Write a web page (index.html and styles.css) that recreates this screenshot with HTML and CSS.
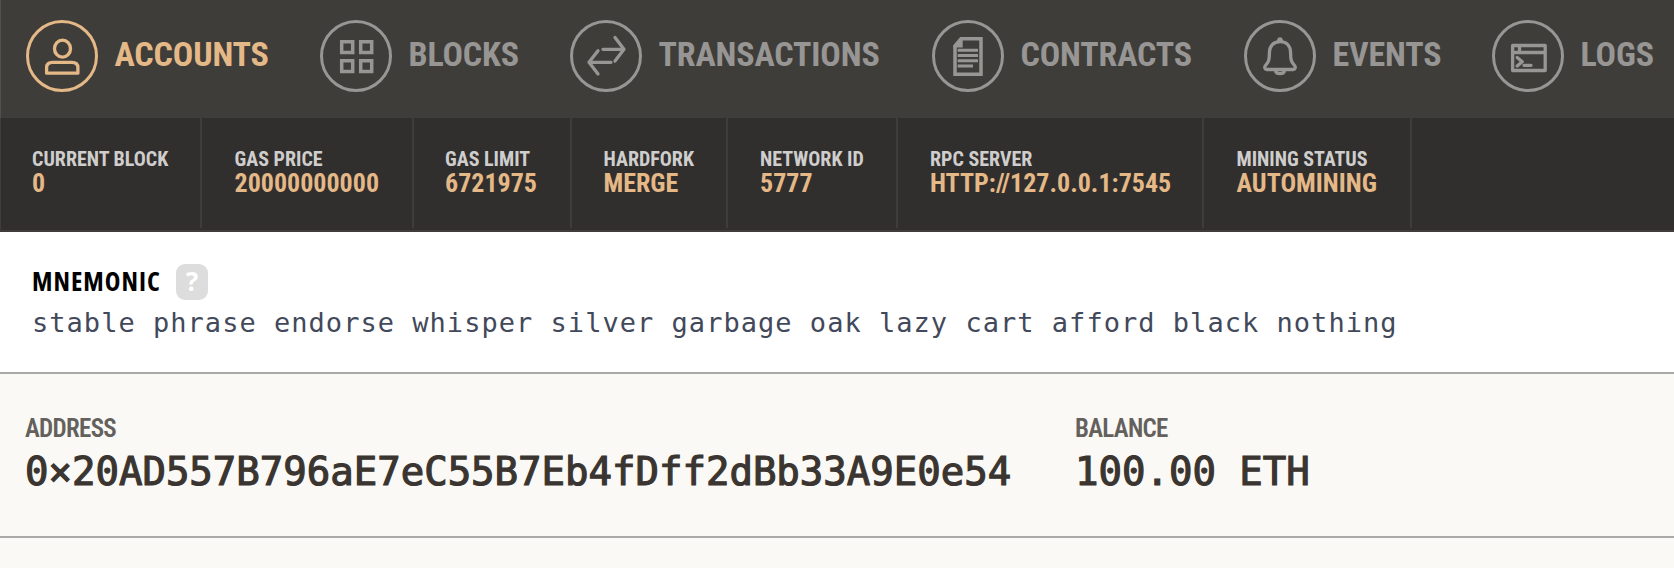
FILE: index.html
```html
<!DOCTYPE html>
<html lang="en">
<head>
    <meta charset="UTF-8">
    <meta name="viewport" content="width=device-width, initial-scale=1.0">
    <title>Accounts</title>
    <link rel="stylesheet" href="styles.css">
</head>
<body>
    <nav class="nav">
        <a class="nav-item accounts active">
            <svg class="icon" viewBox="0 0 72 72">
                <circle class="ring" cx="36" cy="36" r="34.5"/>
                <ellipse cx="36.5" cy="28.7" rx="8" ry="8.5"/>
                <path d="M20.6 53.2V47.5q0-5.2 6-5.2h19.3q6 0 6 5.2v5.7z"/>
            </svg>
            <span class="nav-label">ACCOUNTS</span>
        </a>
        <a class="nav-item blocks">
            <svg class="icon" viewBox="0 0 72 72">
                <circle class="ring" cx="36" cy="36" r="34.5"/>
                <path class="thick" d="M21.7 21.7h11v10.7h-11zM40.7 21.7h11v10.7h-11zM21.7 40.7h11v10.7h-11zM40.7 40.7h11v10.7h-11z"/>
            </svg>
            <span class="nav-label">BLOCKS</span>
        </a>
        <a class="nav-item transactions">
            <svg class="icon" viewBox="0 0 72 72">
                <circle class="ring" cx="36" cy="36" r="34.5"/>
                <path d="M33 29.3h21M45 17.5l9 11.8-9 11.8M41 42.3H19M28 30.7l-9 11.6 9 11.6"/>
            </svg>
            <span class="nav-label">TRANSACTIONS</span>
        </a>
        <a class="nav-item contracts">
            <svg class="icon" viewBox="0 0 72 72">
                <circle class="ring" cx="36" cy="36" r="34.5"/>
                <path class="thick" d="M29 18.8h20v35.4H23V26z"/>
                <path class="fill" d="M30.7 17v10.5h-9.4v-1.5z"/>
                <path class="sharp" d="M25.7 30.3H46M25.7 35.5H46M25.7 40.8H46M25.7 46H41"/>
            </svg>
            <span class="nav-label">CONTRACTS</span>
        </a>
        <a class="nav-item events">
            <svg class="icon" viewBox="0 0 72 72">
                <circle class="ring" cx="36" cy="36" r="34.5"/>
                <path d="M36 21.7c-7 0-10.6 4.8-10.6 11.3 0 7-.8 9-3.4 11.8-2.3 2.5-1.2 4.7 1 4.7h26c2.2 0 3.3-2.2 1-4.7-2.6-2.8-3.4-4.8-3.4-11.8 0-6.5-3.6-11.3-10.6-11.3z"/>
                <path d="M31.5 50.2c.5 4.6 8.5 4.6 9 0"/>
                <path class="fill" d="M31 22.7c1-1.2 2-1.5 2.2-3 .5-3.2 5.1-3.2 5.6 0 .2 1.5 1.2 1.8 2.2 3z"/>
            </svg>
            <span class="nav-label">EVENTS</span>
        </a>
        <a class="nav-item logs">
            <svg class="icon" viewBox="0 0 72 72">
                <circle class="ring" cx="36" cy="36" r="34.5"/>
                <path d="M20.6 25.5h32.6v25H20.6zM20.6 32.5h32.6M27.5 25.5v7M25.2 37.5l5 4.2-5 4.3M32 45.3h7"/>
            </svg>
            <span class="nav-label">LOGS</span>
        </a>
    </nav>

    <div class="status-bar">
        <div class="status block">
            <div class="status-name">CURRENT BLOCK</div>
            <div class="status-value">0</div>
        </div>
        <div class="status gas-price">
            <div class="status-name">GAS PRICE</div>
            <div class="status-value">20000000000</div>
        </div>
        <div class="status gas-limit">
            <div class="status-name">GAS LIMIT</div>
            <div class="status-value">6721975</div>
        </div>
        <div class="status hardfork">
            <div class="status-name">HARDFORK</div>
            <div class="status-value">MERGE</div>
        </div>
        <div class="status network">
            <div class="status-name">NETWORK ID</div>
            <div class="status-value">5777</div>
        </div>
        <div class="status rpc">
            <div class="status-name">RPC SERVER</div>
            <div class="status-value">HTTP://127.0.0.1:7545</div>
        </div>
        <div class="status mining">
            <div class="status-name">MINING STATUS</div>
            <div class="status-value">AUTOMINING</div>
        </div>
    </div>

    <section class="mnemonic">
        <div class="mnemonic-head">
            <h4>MNEMONIC</h4>
            <span class="help">?</span>
        </div>
        <div class="phrase">stable phrase endorse whisper silver garbage oak lazy cart afford black nothing</div>
    </section>

    <section class="account">
        <div class="address">
            <div class="field-name">ADDRESS</div>
            <div class="field-value">0×20AD557B796aE7eC55B7Eb4fDff2dBb33A9E0e54</div>
        </div>
        <div class="balance">
            <div class="field-name">BALANCE</div>
            <div class="field-value">100.00 ETH</div>
        </div>
    </section>
</body>
</html>
```

FILE: styles.css
```css
* {
    box-sizing: border-box;
}
body {
    margin: 0;
    height: 568px;
    overflow: hidden;
    background-color: #faf9f5;
    font-family: "Roboto Condensed", Roboto, sans-serif;
    font-stretch: 75%;
    white-space: nowrap;
}

/* top navigation */
.nav {
    display: flex;
    height: 118px;
    padding: 20px 0 0 25px;
    background-color: #3f3d39;
    border-left: 1px solid #51504c;
}
.nav-item {
    display: flex;
    flex: none;
    gap: 16.5px;
    height: 72px;
    color: #979694;
}
.nav-item.active {
    color: #e4b887;
}
.accounts {
    width: 294px;
}
.blocks {
    width: 250px;
}
.transactions {
    width: 362px;
}
.contracts {
    width: 312px;
}
.events {
    width: 248px;
}
.nav-label {
    font-size: 34px;
    font-weight: 700;
    letter-spacing: -0.15px;
    line-height: 68px;
}
.icon {
    flex: none;
    width: 72px;
    height: 72px;
    fill: none;
    stroke: currentColor;
    stroke-width: 3.3;
    stroke-linecap: round;
    stroke-linejoin: round;
}
.icon .ring {
    stroke-width: 3;
}
.icon .thick {
    stroke-width: 3.5;
    stroke-linejoin: miter;
}
.icon .sharp {
    stroke-width: 3;
    stroke-linecap: butt;
}
.icon .fill {
    fill: currentColor;
    stroke: none;
}

/* chain status */
.status-bar {
    display: flex;
    height: 114px;
    background-color: #312f2d;
    border-bottom: 2px solid #3f3c3b;
    border-left: 1px solid #3f3d3b;
}
.status {
    flex: none;
    height: 110px;
    padding: 30px 0 0 32px;
    border-right: 2px solid #3f3d3a;
    font-weight: 700;
}
.block {
    width: 201px;
    padding-left: 31px;
}
.gas-price {
    width: 212px;
    padding-left: 32.5px;
}
.gas-limit {
    width: 158px;
    padding-left: 31px;
}
.hardfork {
    width: 156px;
    padding-left: 31.5px;
}
.network {
    width: 170px;
}
.rpc {
    width: 306px;
}
.mining {
    width: 208px;
    padding-left: 32.5px;
}
.status-name {
    font-size: 20px;
    line-height: 22px;
    color: #cfcecd;
}
.status-value {
    font-size: 26px;
    line-height: 26px;
    color: #e4b887;
}

/* mnemonic */
.mnemonic {
    height: 142px;
    padding: 32px 0 0 32px;
    background-color: #fff;
    border-bottom: 2px solid #a9a9a8;
}
.mnemonic-head {
    display: flex;
    height: 36px;
}
.mnemonic h4 {
    width: 144px;
    margin: 0;
    font-family: "Open Sans", sans-serif;
    font-size: 26.5px;
    font-weight: 700;
    letter-spacing: 1px;
    line-height: 34px;
    color: #000;
}
.help {
    width: 32px;
    height: 36px;
    border-radius: 9px;
    background-color: #ddd;
    color: #fff;
    font-family: "Noto Sans", sans-serif;
    font-size: 26px;
    font-weight: 700;
    line-height: 35px;
    text-align: center;
}
.phrase {
    font-family: "DejaVu Sans Mono", monospace;
    font-size: 27px;
    letter-spacing: 1.03px;
    line-height: 46px;
    color: #42495a;
}

/* account row */
.account {
    display: flex;
    height: 164px;
    padding: 41px 0 0 25px;
    border-bottom: 2px solid #a9a9a7;
}
.address {
    width: 1050px;
}
.field-name {
    font-size: 25px;
    font-weight: 600;
    letter-spacing: -0.7px;
    line-height: 28px;
    color: #64615d;
}
.field-value {
    font-family: "DejaVu Sans Mono", monospace;
    font-size: 39px;
    line-height: 58px;
    color: #3a3530;
    -webkit-text-stroke: 1.2px #3a3530;
}
```
